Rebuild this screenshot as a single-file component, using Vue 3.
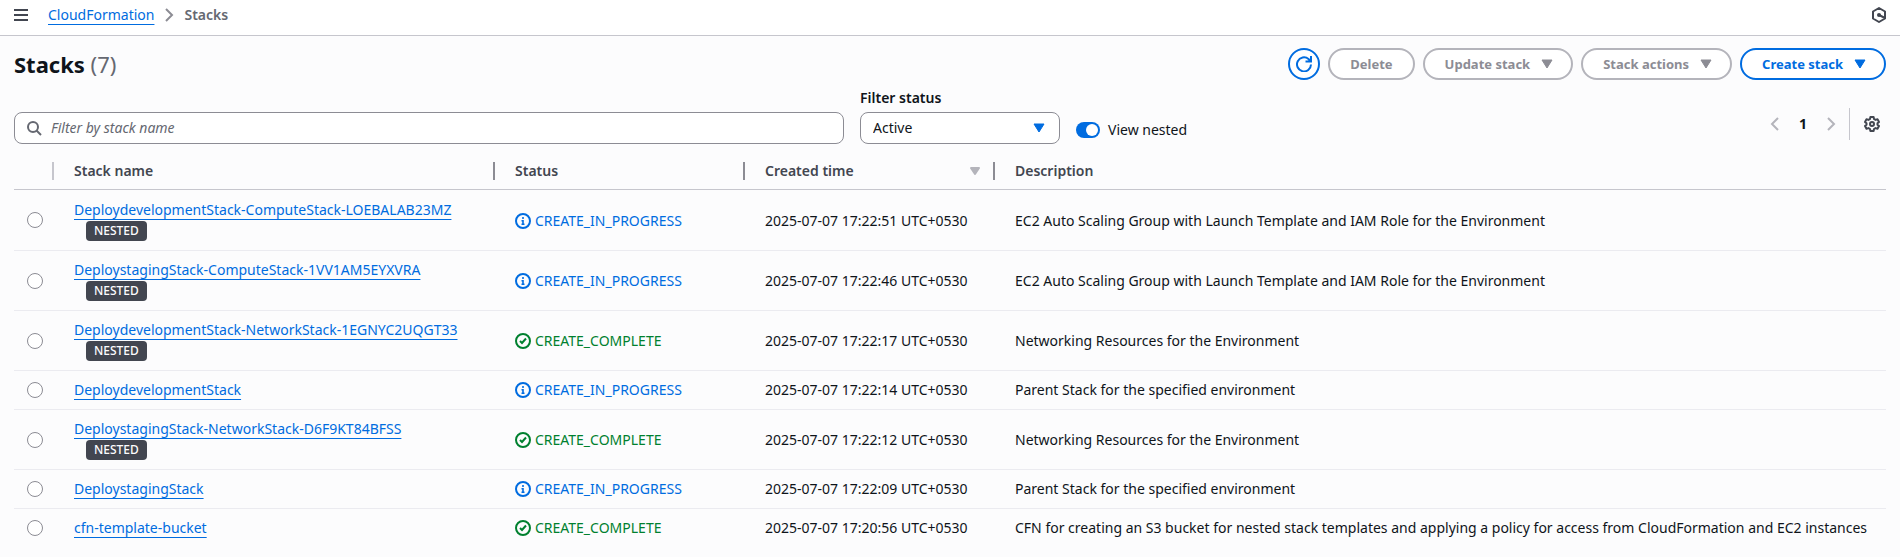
<script setup>
import { ref } from 'vue'

const query = ref('')
const status = ref('Active')
const nested = ref(true)
const selected = ref('')

const env = 'EC2 Auto Scaling Group with Launch Template and IAM Role for the Environment'
const stacks = [
  { name: 'DeploydevelopmentStack-ComputeStack-LOEBALAB23MZ', nested: true, done: false, time: '17:22:51', text: env },
  { name: 'DeploystagingStack-ComputeStack-1VV1AM5EYXVRA', nested: true, done: false, time: '17:22:46', text: env },
  { name: 'DeploydevelopmentStack-NetworkStack-1EGNYC2UQGT33', nested: true, done: true, time: '17:22:17', text: 'Networking Resources for the Environment' },
  { name: 'DeploydevelopmentStack', nested: false, done: false, time: '17:22:14', text: 'Parent Stack for the specified environment' },
  { name: 'DeploystagingStack-NetworkStack-D6F9KT84BFSS', nested: true, done: true, time: '17:22:12', text: 'Networking Resources for the Environment' },
  { name: 'DeploystagingStack', nested: false, done: false, time: '17:22:09', text: 'Parent Stack for the specified environment' },
  { name: 'cfn-template-bucket', nested: false, done: true, time: '17:20:56', text: 'CFN for creating an S3 bucket for nested stack templates and applying a policy for access from CloudFormation and EC2 instances' },
]
</script>

<template>
  <div class="page">
    <header class="topbar">
      <button class="icon-btn" aria-label="Open navigation">
        <svg width="16" height="16" viewBox="0 0 16 16"><path d="M1 3h14M1 8h14M1 13h14" stroke="#424650" stroke-width="2" /></svg>
      </button>
      <nav class="crumbs" aria-label="Breadcrumbs">
        <a class="link" href="#">CloudFormation</a>
        <svg width="16" height="16" viewBox="0 0 16 16"><path d="M5 2l6 6-6 6" fill="none" stroke="#8c8c94" stroke-width="2" /></svg>
        <span class="current">Stacks</span>
      </nav>
      <button class="icon-btn end" aria-label="Tools">
        <svg width="16" height="16" viewBox="0 0 16 16">
          <path d="M8 1l6 3.500v7L8 15l-6-3.500v-7z" fill="none" stroke="#424650" stroke-width="2" stroke-linejoin="round" />
          <circle cx="8" cy="8" r="2" fill="#424650" />
          <path d="M8 8l6 3" stroke="#424650" stroke-width="2" />
        </svg>
      </button>
    </header>

    <main>
      <div class="heading">
        <h1>Stacks <span>(7)</span></h1>
        <div class="actions">
          <button class="btn round" aria-label="Refresh">
            <svg width="16" height="16" viewBox="0 0 16 16"><path d="M15 8.500a7 7 0 1 1-2.500-5.500L14.500 5M15 0v5.500H9.500" fill="none" stroke="#006ce0" stroke-width="2" /></svg>
          </button>
          <button class="btn" disabled>Delete</button>
          <button class="btn menu" disabled>Update stack <svg width="16" height="16" viewBox="0 0 16 16"><path d="M3 4h10l-5 8z" fill="currentColor" stroke="currentColor" stroke-linejoin="round" /></svg></button>
          <button class="btn menu" disabled>Stack actions <svg width="16" height="16" viewBox="0 0 16 16"><path d="M3 4h10l-5 8z" fill="currentColor" stroke="currentColor" stroke-linejoin="round" /></svg></button>
          <button class="btn menu">Create stack <svg width="16" height="16" viewBox="0 0 16 16"><path d="M3 4h10l-5 8z" fill="currentColor" stroke="currentColor" stroke-linejoin="round" /></svg></button>
        </div>
      </div>

      <div class="filters">
        <div class="search">
          <svg width="16" height="16" viewBox="0 0 16 16"><circle cx="7" cy="7" r="5" fill="none" stroke="#656871" stroke-width="2" /><path d="M10.500 10.500L15 15" stroke="#656871" stroke-width="2" /></svg>
          <input v-model="query" type="text" placeholder="Filter by stack name" aria-label="Filter by stack name" />
        </div>
        <div class="field">
          <label for="status">Filter status</label>
          <div class="select">
            <select id="status" v-model="status"><option>Active</option></select>
            <svg width="16" height="16" viewBox="0 0 16 16"><path d="M3 4h10l-5 8z" fill="#006ce0" stroke="#006ce0" stroke-linejoin="round" /></svg>
          </div>
        </div>
        <label class="toggle"><input v-model="nested" type="checkbox" role="switch" />View nested</label>
        <div class="pager">
          <button class="icon-btn" disabled aria-label="Previous page"><svg width="16" height="16" viewBox="0 0 16 16"><path d="M11 2L5 8l6 6" fill="none" stroke="#b4b4bb" stroke-width="2" /></svg></button>
          <button class="page-no" aria-current="page">1</button>
          <button class="icon-btn" disabled aria-label="Next page"><svg width="16" height="16" viewBox="0 0 16 16"><path d="M5 2l6 6-6 6" fill="none" stroke="#b4b4bb" stroke-width="2" /></svg></button>
          <span class="rule"></span>
          <button class="icon-btn" aria-label="Preferences">
            <svg width="16" height="16" viewBox="0 0 16 16" fill="none" stroke="#424650" stroke-width="2" stroke-linejoin="round">
              <path d="M6.400 1h3.200l.4 2 1.500.9 2-.7 1.500 2.700L13.500 7.200v1.600L15 10.100l-1.500 2.700-2-.7-1.500.9-.4 2H6.400L6 13l-1.500-.9-2 .7L1 10.100l1.500-1.300V7.200L1 5.900l1.500-2.700 2 .7L6 3z" />
              <circle cx="8" cy="8" r="2" />
            </svg>
          </button>
        </div>
      </div>

      <table>
        <colgroup><col class="c-pick" /><col class="c-name" /><col class="c-mid" /><col class="c-mid" /><col /></colgroup>
        <thead>
          <tr>
            <th class="pick" aria-label="Selection"></th>
            <th>Stack name</th>
            <th>Status</th>
            <th><div class="sortable">Created time <svg width="16" height="16" viewBox="0 0 16 16"><path d="M4 5h8l-4 6z" fill="#b4b4bb" stroke="#b4b4bb" stroke-width="2" stroke-linejoin="round" /></svg></div></th>
            <th>Description</th>
          </tr>
        </thead>
        <tbody>
          <tr v-for="s in stacks" :key="s.name">
            <td class="pick"><input v-model="selected" type="radio" name="stack" :value="s.name" :aria-label="s.name" /></td>
            <td>
              <a class="link" href="#">{{ s.name }}</a>
              <div v-if="s.nested" class="badge-line"><span class="badge">NESTED</span></div>
            </td>
            <td>
              <div class="status" :class="{ done: s.done }">
                <svg width="16" height="16" viewBox="0 0 16 16" fill="none" stroke="currentColor" stroke-width="2">
                  <circle cx="8" cy="8" r="7" />
                  <path v-if="s.done" d="M5 8l2 2 4-4.500" />
                  <path v-else d="M8 4v2M6.500 7.700H8V12M6.500 11.300h3" stroke-width="1.600" />
                </svg>
                {{ s.done ? 'CREATE_COMPLETE' : 'CREATE_IN_PROGRESS' }}
              </div>
            </td>
            <td>2025-07-07 {{ s.time }} UTC+0530</td>
            <td>{{ s.text }}</td>
          </tr>
        </tbody>
      </table>
    </main>
  </div>
</template>

<style>
body {
  background: #fcfcfd;
}
</style>

<style scoped>
.page {
  color: #0f141a;
  font: 14px/20px "Noto Sans", "Open Sans", sans-serif;
}
.page * {
  box-sizing: border-box;
}
svg {
  display: block;
  flex: none;
}
button,
input,
select {
  margin: 0;
  font: inherit;
  color: inherit;
}
.topbar {
  display: flex;
  align-items: center;
  padding: 5px 13px 10px;
  background: #fff;
  border-bottom: 1px solid #c6c6cd;
}
.icon-btn {
  padding: 0;
  border: 0;
  background: none;
}
.end {
  margin-left: auto;
}
.crumbs {
  display: flex;
  align-items: center;
  gap: 7px;
  margin-left: 19px;
}
.link {
  color: #006ce0;
  text-decoration: underline;
  text-decoration-skip-ink: none;
  text-decoration-thickness: 1px;
  text-underline-offset: 4px;
}
.current {
  color: #656871;
  font-weight: 600;
}
main {
  padding: 12px 14px;
}
.heading {
  display: flex;
  align-items: center;
  justify-content: space-between;
}
h1 {
  margin: 0;
  font-size: 22px;
  line-height: 32px;
}
h1 span {
  color: #656871;
  font-weight: 400;
}
.actions {
  display: flex;
  gap: 8px;
}
.btn {
  display: flex;
  align-items: center;
  gap: 9px;
  height: 32px;
  padding: 0 20px;
  border: 2px solid #006ce0;
  border-radius: 16px;
  background: #fff;
  color: #006ce0;
  font-size: 13px;
  font-weight: 700;
}
.btn:disabled {
  border-color: #b4b4bb;
  color: #8c8c94;
}
.menu {
  padding-right: 16px;
}
.round {
  width: 32px;
  padding: 0;
  justify-content: center;
}
.filters {
  display: flex;
  align-items: flex-end;
  gap: 16px;
  padding-top: 8px;
}
.search {
  display: flex;
  flex: 0 1 830px;
  align-items: center;
  gap: 9px;
  height: 32px;
  padding: 0 11px;
  border: 1px solid #8c8c94;
  border-radius: 8px;
  background: #fff;
}
.search input {
  flex: 1;
  min-width: 0;
  padding: 0;
  border: 0;
  outline: 0;
  background: none;
}
.search input::placeholder {
  color: #656871;
  font-style: italic;
}
.field {
  flex: none;
  width: 200px;
}
.field label {
  display: block;
  padding-bottom: 4px;
  font-weight: 600;
}
.select {
  position: relative;
}
.select select {
  display: block;
  width: 100%;
  height: 32px;
  padding: 0 12px;
  border: 1px solid #8c8c94;
  border-radius: 8px;
  background: #fff;
  appearance: none;
}
.select svg {
  position: absolute;
  top: 8px;
  right: 13px;
  pointer-events: none;
}
.toggle {
  display: flex;
  align-items: center;
  gap: 8px;
  padding-bottom: 4px;
}
.toggle input {
  width: 24px;
  height: 16px;
  border-radius: 8px;
  background: #b4b4bb;
  appearance: none;
}
.toggle input::before {
  display: block;
  width: 12px;
  height: 12px;
  margin: 2px;
  border-radius: 50%;
  background: #fff;
  content: "";
}
.toggle input:checked {
  background: #006ce0;
}
.toggle input:checked::before {
  margin-left: 10px;
}
.pager {
  display: flex;
  align-items: center;
  margin-left: auto;
  padding: 0 6px 4px 0;
}
.page-no {
  width: 40px;
  padding: 0;
  border: 0;
  background: none;
  font-weight: 700;
}
.rule {
  width: 1px;
  height: 32px;
  margin: 0 14px 0 10px;
  background: #c6c6cd;
}
table {
  width: 100%;
  margin-top: 8px;
  border-collapse: separate;
  border-spacing: 0;
  table-layout: fixed;
}
.c-pick {
  width: 40px;
}
.c-name {
  width: 441px;
}
.c-mid {
  width: 250px;
}
th {
  position: relative;
  padding: 9px 12px 8px 20px;
  border-bottom: 1px solid #c6c6cd;
  color: #424650;
  font-weight: 600;
  text-align: left;
}
th:not(:last-child)::after {
  position: absolute;
  top: 10px;
  right: 0;
  width: 2px;
  height: 18px;
  background: #8c8c94;
  content: "";
}
th.pick::after {
  background: #c6c6cd;
}
.sortable {
  display: flex;
  align-items: center;
  justify-content: space-between;
}
td {
  padding: 9px 10px 9px 20px;
  border-bottom: 1px solid #ebebf0;
  vertical-align: middle;
}
tbody tr:first-child td {
  padding-top: 10px;
}
tbody tr:last-child td {
  border-bottom: 0;
}
td.pick,
tbody tr:first-child td.pick {
  padding: 0 0 0 13px;
}
td.pick input {
  display: block;
  width: 16px;
  height: 16px;
  border: 1px solid #8c8c94;
  border-radius: 50%;
  background: #fff;
  appearance: none;
}
td.pick input:checked {
  border: 5px solid #006ce0;
}
td .link {
  display: block;
  width: max-content;
}
.badge-line {
  display: flex;
  padding: 1px 0 0 12px;
}
.badge {
  padding: 0 8px;
  border-radius: 4px;
  background: #424650;
  color: #fcfcfd;
  font-size: 12px;
  font-weight: 500;
}
.status {
  display: flex;
  align-items: center;
  gap: 4px;
  color: #006ce0;
}
.status.done {
  color: #00802f;
}
</style>
